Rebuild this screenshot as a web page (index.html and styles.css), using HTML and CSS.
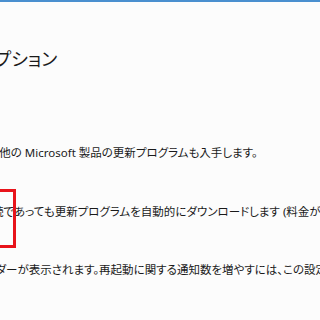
FILE: index.html
```html
<!DOCTYPE html>
<html lang="ja">
<head>
    <meta charset="UTF-8">
    <title>詳細オプション</title>
    <link rel="stylesheet" href="styles.css">
</head>
<body>

<div class="top-bar"></div>

<div class="page">
    <h1 class="title">詳細オプション</h1>

    <p class="option first">更新プログラムの適用時に他の Microsoft 製品の更新プログラムも入手します。</p>

    <p class="option second">
        <span class="mark"></span>従量制課金接続であっても更新プログラムを自動的にダウンロードします (料金がかかる場合があります)
    </p>

    <p class="option third">再起動のリマインダーが表示されます。再起動に関する通知数を増やすには、この設定をオンにします。</p>
</div>

</body>
</html>
```

FILE: styles.css
```css
body {
    margin: 0;
    background-color: #fcfcfc;
    font-family: "Noto Sans", "Noto Sans CJK JP", sans-serif;
    font-feature-settings: "palt";
    color: #1a1a1a;
    overflow: hidden;
    width: 320px;
    height: 320px;
}

.top-bar {
    height: 2px;
    background-color: #4a8fcf;
}

.page {
    white-space: nowrap;
}

.title {
    font-size: 18px;
    font-weight: normal;
    margin: 43px 0 0 -58px;
    line-height: 28px;
}

.option {
    font-size: 11.5px;
    line-height: 16px;
    margin: 0;
}

.first {
    margin: 72px 0 0 -133px;
}

.second {
    position: relative;
    margin: 43px 0 0 -77px;
}

.third {
    margin: 42px 0 0 -90px;
}

/* red highlight box over the text */
.mark {
    position: absolute;
    display: block;
    left: 51px;
    top: -15px;
    width: 36px;
    height: 53px;
    border: 3px solid #e8141b;
}
```
